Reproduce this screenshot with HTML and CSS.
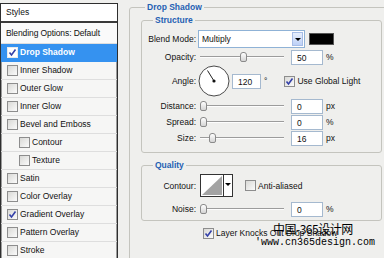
FILE: index.html
```html
<!DOCTYPE html>
<html lang="en">
<head>
  <meta charset="UTF-8" />
  <title>Layer Style - Drop Shadow</title>
  <link rel="stylesheet" href="styles.css">
</head>
<body>
  <div class="dialog">
    <!-- Styles list -->
    <div class="styles">
      <div class="styles-head">Styles</div>
      <div class="style-row blend">Blending Options: Default</div>
      <div class="style-row selected"><span class="cb on"><svg viewBox="0 0 9 9"><path d="M1.5 4.5 L3.5 7 L7.5 1.5"/></svg></span>Drop Shadow</div>
      <div class="style-row"><span class="cb"></span>Inner Shadow</div>
      <div class="style-row"><span class="cb"></span>Outer Glow</div>
      <div class="style-row"><span class="cb"></span>Inner Glow</div>
      <div class="style-row"><span class="cb"></span>Bevel and Emboss</div>
      <div class="style-row sub"><span class="cb"></span>Contour</div>
      <div class="style-row sub"><span class="cb"></span>Texture</div>
      <div class="style-row"><span class="cb"></span>Satin</div>
      <div class="style-row"><span class="cb"></span>Color Overlay</div>
      <div class="style-row"><span class="cb on"><svg viewBox="0 0 9 9"><path d="M1.5 4.5 L3.5 7 L7.5 1.5"/></svg></span>Gradient Overlay</div>
      <div class="style-row"><span class="cb"></span>Pattern Overlay</div>
      <div class="style-row"><span class="cb"></span>Stroke</div>
    </div>

    <!-- Settings -->
    <div class="settings">
      <fieldset class="group outer">
        <legend>Drop Shadow</legend>

        <fieldset class="group structure">
          <legend>Structure</legend>
          <div class="field blend-field">
            <label>Blend Mode:</label>
            <div class="select"><span class="select-value">Multiply</span><span class="drop"></span></div>
            <span class="swatch"></span>
          </div>
          <div class="field">
            <label>Opacity:</label>
            <div class="slider"><span class="thumb" style="left: 40px"></span></div>
            <span class="num">50</span><span class="unit">%</span>
          </div>
          <div class="field angle-field">
            <label>Angle:</label>
            <svg class="dial" viewBox="0 0 32 32" width="32" height="32">
              <circle cx="16" cy="16" r="15" fill="#fff" stroke="#4a4a4a" stroke-width="1"/>
              <line x1="16" y1="16" x2="9.5" y2="5.5" stroke="#222" stroke-width="1"/>
              <circle cx="16" cy="16" r="1.6" fill="#111"/>
            </svg>
            <span class="num angle-num">120</span><span class="unit">°</span>
            <span class="cb on global"><svg viewBox="0 0 9 9"><path d="M1.5 4.5 L3.5 7 L7.5 1.5"/></svg></span>
            <span class="check-label">Use Global Light</span>
          </div>
          <div class="field distance-field">
            <label>Distance:</label>
            <div class="slider"><span class="thumb" style="left: 0px"></span></div>
            <span class="num">0</span><span class="unit">px</span>
          </div>
          <div class="field">
            <label>Spread:</label>
            <div class="slider"><span class="thumb" style="left: 0px"></span></div>
            <span class="num">0</span><span class="unit">%</span>
          </div>
          <div class="field">
            <label>Size:</label>
            <div class="slider"><span class="thumb" style="left: 9px"></span></div>
            <span class="num">16</span><span class="unit">px</span>
          </div>
        </fieldset>

        <fieldset class="group quality">
          <legend>Quality</legend>
          <div class="field contour-field">
            <label>Contour:</label>
            <div class="contour">
              <svg class="contour-thumb" viewBox="0 0 24 23" width="24" height="23">
                <rect x="0.5" y="0.5" width="23" height="22" fill="#fff" stroke="#333"/>
                <polygon points="2,21 22,2 22,21" fill="#a3a3a3"/>
              </svg>
              <span class="drop small"></span>
            </div>
            <span class="cb anti"></span>
            <span class="check-label">Anti-aliased</span>
          </div>
          <div class="field noise-field">
            <label>Noise:</label>
            <div class="slider"><span class="thumb" style="left: 0px"></span></div>
            <span class="num">0</span><span class="unit">%</span>
          </div>
        </fieldset>

        <div class="knock">
          <span class="cb on"><svg viewBox="0 0 9 9"><path d="M1.5 4.5 L3.5 7 L7.5 1.5"/></svg></span>
          <span class="check-label">Layer Knocks Out Drop Shadow</span>
        </div>
      </fieldset>
    </div>

    <div class="watermark">
      <div class="wm-cn">中国-365设计网</div>
      <div class="wm-url">'www.cn365design.com</div>
    </div>
  </div>
</body>
</html>
```

FILE: styles.css
```css
body, html {
  margin: 0;
  padding: 0;
  background-color: #efefed;
  font-family: "Liberation Sans", Arial, sans-serif;
  font-size: 8.5px;
  color: #111;
}

.dialog {
  position: relative;
  width: 384px;
  height: 258px;
  overflow: hidden;
  display: flex;
  align-items: flex-start;
}

/* ---------- styles list ---------- */

.styles {
  width: 118px;
  flex: none;
  box-sizing: border-box;
  margin-top: 3px;
  border: 1px solid #2e2e2e;
  box-shadow: inset 1px 0 0 #9a9a9a, inset -1px 0 0 #9a9a9a;
  background: #f6f6f5;
}

.styles-head {
  height: 17px;
  line-height: 17px;
  padding-left: 5px;
  background: #fff;
  border-bottom: 2px solid #3a3a3a;
}

.style-row {
  height: 17px;
  line-height: 17px;
  border-bottom: 1px solid #dedede;
  display: flex;
  align-items: center;
  padding-left: 6px;
  white-space: nowrap;
}

.style-row.blend {
  height: 20px;
  line-height: 20px;
  padding-left: 5px;
  background: #fafafa;
  letter-spacing: -0.1px;
}

.style-row.selected {
  background: #3592f0;
  color: #fff;
  font-weight: bold;
  border-bottom-color: #3592f0;
}

.style-row.sub {
  padding-left: 18px;
}

.style-row .cb {
  margin-right: 2px;
}

/* ---------- checkbox ---------- */

.cb {
  display: inline-block;
  flex: none;
  width: 9px;
  height: 9px;
  border: 1px solid #8d8d8d;
  background: linear-gradient(135deg, #d9d9d6, #fbfbfb);
  position: relative;
}

.cb svg {
  display: block;
  width: 9px;
  height: 9px;
}

.cb svg path {
  fill: none;
  stroke: #3440a8;
  stroke-width: 1.6;
}

.selected .cb {
  background: #fff;
  border-color: #eaeaea;
}

.check-label {
  white-space: nowrap;
}

/* ---------- settings ---------- */

.settings {
  flex: 1;
  min-width: 0;
}

.group {
  margin: 0;
  padding: 0;
  border: 1px solid #c4c4be;
  border-radius: 3px;
  min-inline-size: 0;
}

.group legend {
  padding: 0 2px;
  line-height: 12px;
  font-weight: bold;
  color: #1f5fb3;
}

.outer {
  margin: 1px -6px 0 11px;
  padding: 0 7px 40px 11px;
}

.outer > legend {
  margin-left: 4px;
}

.structure {
  margin-top: 1px;
  padding-bottom: 6px;
}

.quality {
  margin-top: 6px;
  padding-bottom: 3px;
}

.structure legend, .quality legend {
  margin-left: 11px;
}

.field {
  display: flex;
  align-items: center;
  height: 16px;
  white-space: nowrap;
}

.field label {
  width: 54px;
  flex: none;
  text-align: right;
  margin-right: 4px;
}

.blend-field {
  height: 18px;
  margin-top: 4px;
  margin-bottom: 1px;
}

.blend-field label {
  margin-right: 2px;
}

.select {
  width: 107px;
  height: 18px;
  box-sizing: border-box;
  border: 1px solid #8fb2d6;
  background: #fff;
  display: flex;
  align-items: center;
}

.select-value {
  flex: 1;
  padding-left: 3px;
}

.drop {
  width: 11px;
  height: 14px;
  margin-right: 1px;
  border: 1px solid #a7bde6;
  background: linear-gradient(#e6eefc, #bdd0f6);
  box-sizing: border-box;
  position: relative;
}

.drop::after {
  content: "";
  position: absolute;
  left: 2px;
  top: 5px;
  border-left: 3px solid transparent;
  border-right: 3px solid transparent;
  border-top: 3px solid #000;
}

.swatch {
  width: 25px;
  height: 12px;
  margin-left: 4px;
  background: #000;
  box-sizing: border-box;
  border: 1px solid #555;
}

.slider {
  position: relative;
  width: 84px;
  height: 16px;
  flex: none;
}

.slider::before {
  content: "";
  position: absolute;
  left: 0;
  right: 0;
  top: 7px;
  height: 1px;
  background: #9c9c9c;
  box-shadow: 0 1px 0 #fdfdfd;
}

.thumb {
  position: absolute;
  top: 3px;
  width: 5px;
  height: 8px;
  border: 1px solid #8a8a8a;
  border-radius: 3px 3px 2px 2px;
  background: linear-gradient(#ffffff, #d4d4d4);
}

.num {
  width: 32px;
  height: 15px;
  line-height: 15px;
  box-sizing: border-box;
  border: 1px solid #a5b9cf;
  background: #fff;
  padding-left: 5px;
  margin-left: 7px;
  flex: none;
}

.unit {
  margin-left: 3px;
}

.angle-field {
  height: 32px;
}

.angle-field label {
  margin-right: 2px;
}

.dial {
  flex: none;
}

.angle-num {
  width: 29px;
  margin-left: 2px;
}

.cb.global {
  margin-left: 17px;
  margin-right: 2px;
}

.distance-field {
  margin-top: 1px;
}

.contour-field {
  height: 23px;
  margin-top: 3px;
}

.contour {
  display: flex;
  align-items: stretch;
  height: 23px;
}

.contour-thumb {
  display: block;
}

.drop.small {
  width: 9px;
  height: 23px;
  margin: 0;
  border: 1px solid #333;
  border-left: none;
  background: #fff;
}

.drop.small::after {
  left: 1px;
  top: 8px;
}

.cb.anti {
  margin-left: 12px;
  margin-right: 2px;
}

.noise-field {
  margin-top: 4px;
}

.knock {
  display: flex;
  align-items: center;
  height: 12px;
  margin-top: 6px;
  padding-left: 62px;
}

.knock .cb {
  margin-right: 2px;
}

/* ---------- watermark ---------- */

.watermark {
  position: absolute;
  left: 255px;
  top: 223px;
  color: #000;
  font-family: "Noto Sans CJK SC", "Liberation Mono", monospace;
  line-height: 12px;
}

.wm-cn {
  font-size: 12px;
  margin-left: 18px;
  letter-spacing: -0.5px;
}

.wm-url {
  font-family: "Liberation Mono", monospace;
  font-size: 10px;
  margin-top: 2px;
}
```
